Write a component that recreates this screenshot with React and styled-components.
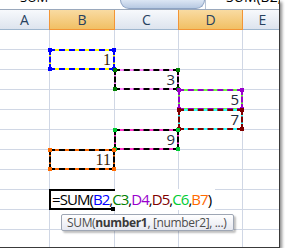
import styled, { createGlobalStyle } from "styled-components"

const GlobalStyle = createGlobalStyle`
  body {
    margin: 0;
    background: #ffffff;
  }
`

const COLS = [
  { name: "A", width: 50 },
  { name: "B", width: 65, selected: true },
  { name: "C", width: 64 },
  { name: "D", width: 64, selected: true },
  { name: "E", width: 40 },
]
const ROW_H = 20
const HEAD_TOP = 10
const BODY_TOP = 30

const colX = (i) => COLS.slice(0, i).reduce((s, c) => s + c.width, 0)

const RANGES = [
  { col: 1, row: 2, value: "1", dash: "#0000ff", gap: "#ffff00", corner: "#0000ff", serif: true },
  { col: 2, row: 3, value: "3", dash: "#000000", gap: "#ff80ff", corner: "#008000" },
  { col: 3, row: 4, value: "5", dash: "#9900cc", gap: "#66ff33", corner: "#9900cc" },
  { col: 3, row: 5, value: "7", dash: "#800000", gap: "#33ffff", corner: "#800000" },
  { col: 2, row: 6, value: "9", dash: "#000000", gap: "#ff33cc", corner: "#00cc33" },
  { col: 1, row: 7, value: "11", dash: "#000000", gap: "#ff6a00", corner: "#ff6a00", serif: true },
]

const REFS = [
  { text: "B2", color: "#0000ff" },
  { text: "C3", color: "#008000" },
  { text: "D4", color: "#9900cc" },
  { text: "D5", color: "#800000" },
  { text: "C6", color: "#00cc33" },
  { text: "B7", color: "#ff6a00" },
]

const Frame = styled.div`
  position: relative;
  width: 279px;
  height: 247px;
  overflow: hidden;
  background: #ffffff;
  border-right: 1px solid #3a3a3a;
  border-bottom: 1px solid #3a3a3a;
  box-shadow: 2px 2px 3px rgba(0, 0, 0, 0.45);
  font-family: "Open Sans", "Liberation Sans", sans-serif;
`

const TopBar = styled.div`
  display: flex;
  height: ${HEAD_TOP}px;
  border-bottom: 1px solid #9aa8bc;
  box-sizing: border-box;
  overflow: hidden;
`

const NameBox = styled.div`
  width: 120px;
  position: relative;
  font-size: 13px;
  color: #000;
  line-height: 13px;

  span {
    position: absolute;
    left: 20px;
    top: -9px;
  }
`

const FxButton = styled.div`
  width: 85px;
  background: linear-gradient(#dce6f4, #b7c9e2);
  border: 1px solid #8ea3c3;
  border-top: none;
  border-radius: 0 0 12px 12px;
  box-sizing: border-box;
`

const FormulaInput = styled.div`
  flex: 1;
  position: relative;
  border-left: 1px solid #b9c4d4;
  font-size: 14px;
  line-height: 14px;

  span {
    position: absolute;
    left: 12px;
    top: -10px;
    white-space: nowrap;
  }
`

const Sheet = styled.div`
  display: grid;
  grid-template-columns: ${COLS.map((c) => `${c.width}px`).join(" ")};
  grid-auto-rows: ${ROW_H}px;
`

const ColHeader = styled.div`
  display: flex;
  align-items: center;
  justify-content: center;
  font-size: 14px;
  color: #27415f;
  box-sizing: border-box;
  border-right: 1px solid ${(p) => (p.$selected ? "#f29536" : "#c5d0df")};
  border-bottom: 1px solid ${(p) => (p.$selected ? "#f29536" : "#9eb6ce")};
  background: ${(p) =>
    p.$selected
      ? "linear-gradient(#f9dba2, #f1c064)"
      : "linear-gradient(#f7f9fc, #dde4ee)"};
  ${(p) => p.$selected && "border-left: 1px solid #f29536; margin-left: -1px;"}
`

const Cell = styled.div`
  box-sizing: border-box;
  border-right: 1px solid #d0d7e5;
  border-bottom: 1px solid #d0d7e5;
`

const RangeBox = styled.div`
  position: absolute;
  box-sizing: border-box;
  border: 2px dashed ${(p) => p.$dash};
  background: linear-gradient(#fff, #fff) padding-box, ${(p) => p.$gap} border-box;
  display: flex;
  align-items: flex-end;
  justify-content: flex-end;
  padding: 0 2px 0 0;
  font-family: ${(p) =>
    p.$serif ? '"Liberation Serif", serif' : '"Open Sans", "Liberation Sans", sans-serif'};
  font-size: ${(p) => (p.$serif ? "16px" : "15px")};
  line-height: 17px;
  color: ${(p) => (p.$serif ? "#3a1d08" : "#1e2a3a")};
`

const Handle = styled.span`
  position: absolute;
  width: 4px;
  height: 4px;
  background: ${(p) => p.$color};
  ${(p) => (p.$top ? "top: -3px;" : "bottom: -3px;")}
  ${(p) => (p.$left ? "left: -3px;" : "right: -3px;")}
`

const Editor = styled.div`
  position: absolute;
  left: 49px;
  top: ${BODY_TOP + 8 * ROW_H - 1}px;
  width: 166px;
  height: 21px;
  background: #ffffff;
`

const ActiveCell = styled.div`
  position: absolute;
  left: 0;
  top: 0;
  width: 66px;
  height: 21px;
  box-sizing: border-box;
  border: 2px solid #000;
  border-right: none;

  &::after {
    content: "";
    position: absolute;
    right: 0;
    bottom: -3px;
    width: 4px;
    height: 4px;
    background: #000;
  }
`

const FormulaText = styled.div`
  position: relative;
  padding-left: 3px;
  font-family: "Open Sans", "Liberation Sans", sans-serif;
  font-size: 15px;
  line-height: 21px;
  letter-spacing: -0.95px;
  color: #000;
  white-space: nowrap;
`

const Ref = styled.span`
  color: ${(p) => p.$color};
`

const Tooltip = styled.div`
  position: absolute;
  left: 61px;
  top: 214px;
  width: 173px;
  height: 17px;
  box-sizing: border-box;
  border: 1px solid #9ea6b4;
  border-radius: 2px;
  background: linear-gradient(#ffffff, #e6e8f1);
  box-shadow: 2px 2px 2px rgba(0, 0, 0, 0.25);
  font-family: "Open Sans", "Liberation Sans", sans-serif;
  font-size: 12px;
  line-height: 15px;
  letter-spacing: -0.35px;
  color: #4c4c4c;
  padding-left: 5px;
  white-space: nowrap;

  b {
    color: #3a3a3a;
  }
`

function Range({ col, row, value, dash, gap, corner, serif }) {
  const style = {
    left: colX(col) - 1,
    top: BODY_TOP + (row - 1) * ROW_H - 1,
    width: COLS[col].width + 1,
    height: ROW_H + 1,
  }
  return (
    <RangeBox style={style} $dash={dash} $gap={gap} $serif={serif}>
      {value}
      <Handle $color={corner} $top $left />
      <Handle $color={corner} $top />
      <Handle $color={corner} $left />
      <Handle $color={corner} />
    </RangeBox>
  )
}

function Formula() {
  return (
    <>
      =SUM(
      {REFS.map((r, i) => (
        <span key={r.text}>
          {i > 0 && ","}
          <Ref $color={r.color}>{r.text}</Ref>
        </span>
      ))}
      )
    </>
  )
}

export default function App() {
  const rows = Array.from({ length: 11 })
  return (
    <>
      <GlobalStyle />
      <Frame>
        <TopBar>
          <NameBox>
            <span>SUM</span>
          </NameBox>
          <FxButton />
          <FormulaInput>
            <span>=SUM(B2,C3,D4,D5,C6,B7)</span>
          </FormulaInput>
        </TopBar>
        <Sheet>
          {COLS.map((c) => (
            <ColHeader key={c.name} $selected={c.selected}>
              {c.name}
            </ColHeader>
          ))}
          {rows.map((_, r) =>
            COLS.map((c) => <Cell key={`${c.name}${r}`} />)
          )}
        </Sheet>
        {RANGES.map((r) => (
          <Range key={`${r.col}-${r.row}`} {...r} />
        ))}
        <Editor>
          <FormulaText>
            <Formula />
          </FormulaText>
          <ActiveCell />
        </Editor>
        <Tooltip>
          SUM(<b>number1</b>, [number2], ...)
        </Tooltip>
      </Frame>
    </>
  )
}
